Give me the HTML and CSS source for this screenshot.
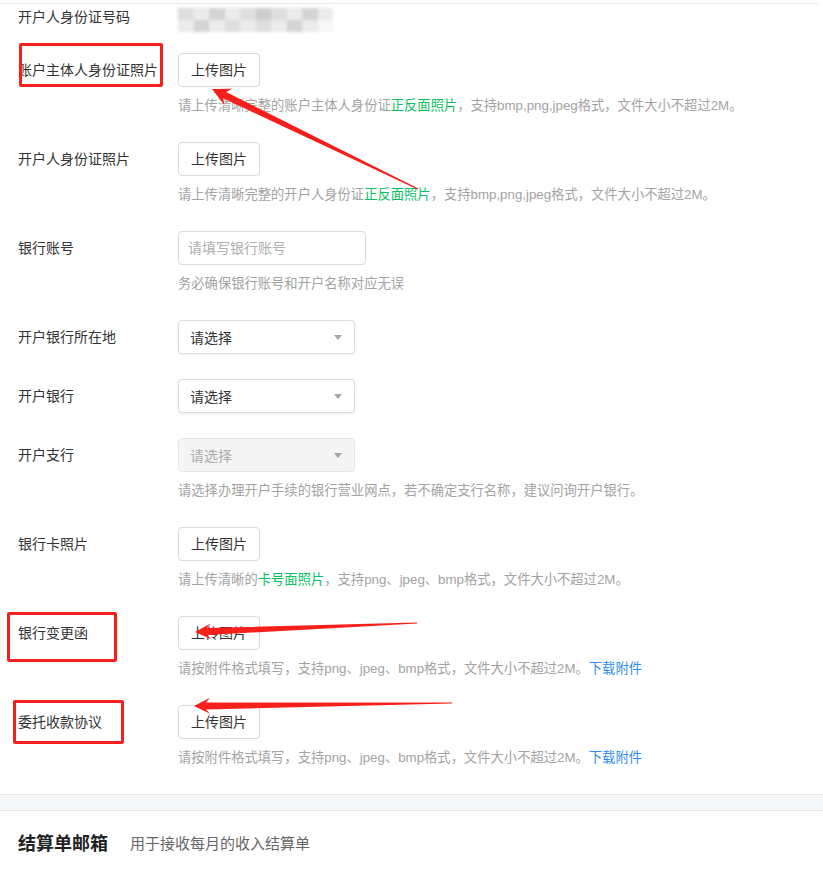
FILE: index.html
```html
<!DOCTYPE html>
<html lang="zh-CN">
<head>
<meta charset="utf-8">
<title>结算账户</title>
<link rel="stylesheet" href="styles.css">
</head>
<body>
<div class="page">
  <div class="form">
    <div class="row row-static">
      <div class="label label-static">开户人身份证号码</div>
      <div class="mosaic">
        <span class="c2"></span><span class="c1"></span><span class="c3"></span><span class="c1"></span><span class="c2"></span><span class="c4"></span><span class="c2"></span><span class="c1"></span><span class="c3"></span><span class="c1"></span>
        <span class="c1"></span><span class="c3"></span><span class="c1"></span><span class="c2"></span><span class="c1"></span><span class="c2"></span><span class="c1"></span><span class="c3"></span><span class="c1"></span><span class="c0"></span>
      </div>
    </div>

    <div class="row">
      <div class="label">账户主体人身份证照片</div>
      <div class="field">
        <button class="upload">上传图片</button>
        <p class="hint">请上传清晰完整的账户主体人身份证<span class="green">正反面照片</span>，支持bmp,png,jpeg格式，文件大小不超过2M。</p>
      </div>
    </div>

    <div class="row">
      <div class="label">开户人身份证照片</div>
      <div class="field">
        <button class="upload">上传图片</button>
        <p class="hint">请上传清晰完整的开户人身份证<span class="green">正反面照片</span>，支持bmp,png,jpeg格式，文件大小不超过2M。</p>
      </div>
    </div>

    <div class="row">
      <div class="label">银行账号</div>
      <div class="field">
        <input class="text-input" type="text" placeholder="请填写银行账号">
        <p class="hint">务必确保银行账号和开户名称对应无误</p>
      </div>
    </div>

    <div class="row">
      <div class="label">开户银行所在地</div>
      <div class="field">
        <div class="select"><span>请选择</span><i class="caret"></i></div>
      </div>
    </div>

    <div class="row">
      <div class="label">开户银行</div>
      <div class="field">
        <div class="select"><span>请选择</span><i class="caret"></i></div>
      </div>
    </div>

    <div class="row">
      <div class="label">开户支行</div>
      <div class="field">
        <div class="select disabled"><span>请选择</span><i class="caret"></i></div>
        <p class="hint">请选择办理开户手续的银行营业网点，若不确定支行名称，建议问询开户银行。</p>
      </div>
    </div>

    <div class="row">
      <div class="label">银行卡照片</div>
      <div class="field">
        <button class="upload">上传图片</button>
        <p class="hint">请上传清晰的<span class="green">卡号面照片</span>，支持png、jpeg、bmp格式，文件大小不超过2M。</p>
      </div>
    </div>

    <div class="row">
      <div class="label">银行变更函</div>
      <div class="field">
        <button class="upload">上传图片</button>
        <p class="hint">请按附件格式填写，支持png、jpeg、bmp格式，文件大小不超过2M。<a class="link" href="#">下载附件</a></p>
      </div>
    </div>

    <div class="row">
      <div class="label">委托收款协议</div>
      <div class="field">
        <button class="upload">上传图片</button>
        <p class="hint">请按附件格式填写，支持png、jpeg、bmp格式，文件大小不超过2M。<a class="link" href="#">下载附件</a></p>
      </div>
    </div>
  </div>

  <div class="divider"></div>

  <div class="section-head">
    <h2 class="section-title">结算单邮箱</h2>
    <span class="section-sub">用于接收每月的收入结算单</span>
  </div>

  <div class="annot box1"></div>
  <div class="annot box2"></div>
  <div class="annot box3"></div>

  <svg class="arrows" width="823" height="872" viewBox="0 0 823 872" xmlns="http://www.w3.org/2000/svg">
    <polygon fill="#f5201c" points="212,89 224.3,105 223.1,98.3 417.7,189.6 418.3,188.4 226.1,92 232.1,88.8"/>
    <polygon fill="#f5201c" points="195,632 211.3,639.3 207.1,635 417,623.6 417,622.4 206.9,628 210.7,623.4"/>
    <polygon fill="#f5201c" points="194,706 210.1,713.8 206,709.4 452,703.6 452,702.4 206,702.4 209.9,697.8"/>
  </svg>
</div>
</body>
</html>
```

FILE: styles.css
```css
* {
  box-sizing: border-box;
}

html, body {
  margin: 0;
  padding: 0;
  background: #fff;
}

body {
  font-family: "Liberation Sans", "Noto Sans CJK SC", sans-serif;
  color: #333;
}

.page {
  position: relative;
  width: 823px;
  min-height: 872px;
  overflow: hidden;
}

.form {
  width: 818px;
  margin-top: 3px;
  border-top: 1px solid #e8e8e8;
  padding: 0 0 25px 18px;
  display: flex;
  flex-direction: column;
  gap: 25px;
}

.row {
  display: flex;
  align-items: flex-start;
}

.row-static {
  margin-bottom: -4px;
}

.label {
  width: 160px;
  flex: none;
  font-size: 14px;
  line-height: 34px;
  color: #333;
  white-space: nowrap;
}

.label-static {
  line-height: 26px;
}

.field {
  display: flex;
  flex-direction: column;
  align-items: flex-start;
}

.mosaic {
  margin-top: 4px;
  width: 155px;
  height: 24px;
  display: grid;
  grid-template-columns: repeat(10, 1fr);
  grid-template-rows: 1fr 1fr;
  filter: blur(1.5px);
}

.mosaic .c0 { background: #f7f7f7; }
.mosaic .c1 { background: #ebebeb; }
.mosaic .c2 { background: #dedede; }
.mosaic .c3 { background: #d4d4d4; }
.mosaic .c4 { background: #cdcdcd; }

.upload {
  height: 34px;
  padding: 0 12px;
  border: 1px solid #d9d9d9;
  border-radius: 4px;
  background: #fff;
  font-family: inherit;
  font-size: 14px;
  color: #333;
  line-height: 32px;
  cursor: pointer;
}

.hint {
  margin: 8px 0 0;
  font-size: 13.3px;
  line-height: 22px;
  color: #a3a3a3;
  white-space: nowrap;
}

.green {
  color: #07c160;
}

.link {
  color: #2d8cf0;
  text-decoration: none;
}

.text-input {
  width: 188px;
  height: 34px;
  padding: 0 9px;
  border: 1px solid #dcdcdc;
  border-radius: 4px;
  font-family: inherit;
  font-size: 14px;
  color: #333;
  outline: none;
}

.text-input::placeholder {
  color: #b0b0b0;
}

.select {
  width: 177px;
  height: 34px;
  padding: 0 12px 0 11px;
  border: 1px solid #dcdcdc;
  border-radius: 4px;
  background: #fff;
  box-shadow: 0 1px 3px rgba(0, 0, 0, 0.08);
  display: flex;
  align-items: center;
  justify-content: space-between;
  font-size: 14px;
  color: #333;
}

.select.disabled {
  background: #f5f5f5;
  border-color: #e6e6e6;
  box-shadow: none;
  color: #ababab;
}

.caret {
  width: 0;
  height: 0;
  border-left: 4px solid transparent;
  border-right: 4px solid transparent;
  border-top: 5px solid #a6a6a6;
}

.divider {
  height: 17px;
  background: #f5f6f7;
  border-top: 1px solid #e6e7e8;
  border-bottom: 1px solid #e6e7e8;
}

.section-head {
  padding: 20px 18px 0;
  display: flex;
  align-items: center;
  gap: 22px;
}

.section-title {
  margin: 0;
  font-size: 18px;
  font-weight: bold;
  line-height: 26px;
  color: #222;
}

.section-sub {
  font-size: 15px;
  line-height: 26px;
  color: #666;
}

.annot {
  position: absolute;
  border: 3px solid #f5201c;
  border-radius: 2px;
}

.box1 {
  left: 19px;
  top: 43px;
  width: 144px;
  height: 44px;
}

.box2 {
  left: 7px;
  top: 612px;
  width: 110px;
  height: 50px;
}

.box3 {
  left: 13px;
  top: 700px;
  width: 111px;
  height: 44px;
}

.arrows {
  position: absolute;
  left: 0;
  top: 0;
  pointer-events: none;
}
```
